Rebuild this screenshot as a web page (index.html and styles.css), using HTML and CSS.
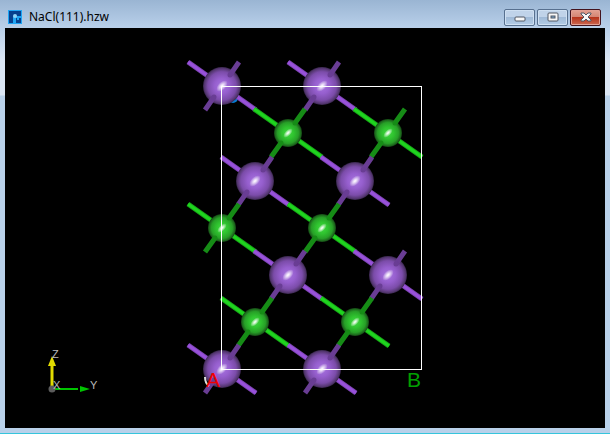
FILE: index.html
```html
<!DOCTYPE html>
<html lang="en">
<head>
  <meta charset="UTF-8" />
  <meta name="viewport" content="width=device-width, initial-scale=1.0" />
  <title>NaCl(111).hzw</title>
  <link rel="stylesheet" href="styles.css">
</head>
<body>

  <div class="window">
    <header class="titlebar">
      <svg class="app-icon" viewBox="0 0 14 14" aria-hidden="true">
        <rect width="14" height="14" fill="#1fa6f5" />
        <rect x="1" y="1" width="12" height="12" fill="#07418f" />
        <path d="M5 13V6h8v2H8v5z" fill="#1fa6f5" />
        <circle cx="7" cy="6" r="2" fill="#8ed2f7" />
        <rect x="8" y="8" width="5" height="5" fill="#07418f" />
        <rect x="9" y="8" width="2" height="2" fill="#1fa6f5" />
      </svg>
      <h1 class="title">NaCl(111).hzw</h1>
      <div class="controls">
        <button class="control" aria-label="Minimize">
          <svg viewBox="0 0 12 10"><rect x="1" y="5" width="10" height="4" rx="1" fill="#f7f7f7" stroke="#505763" /></svg>
        </button>
        <button class="control" aria-label="Maximize">
          <svg viewBox="0 0 12 10"><rect x="1" y="1" width="10" height="8" rx="1" fill="#f7f7f7" stroke="#505763" /><rect x="4" y="4" width="4" height="2" fill="#7dabd3" stroke="#505763" /></svg>
        </button>
        <button class="control close" aria-label="Close">
          <svg viewBox="0 0 12 10"><path d="M1 1h3l2 2 2-2h3v1L8 5l3 3v1H8L6 7 4 9H1V8l3-3-3-3z" fill="#f7f7f7" stroke="#505763" /></svg>
        </button>
      </div>
    </header>

    <main class="viewport">
      <svg class="scene" viewBox="0 0 600 400" role="img" aria-label="NaCl(111) crystal structure">
        <defs>
          <radialGradient id="naFill" cx="0.5" cy="0.5" r="0.5">
            <stop offset="0" stop-color="#a774e0" />
            <stop offset="0.4" stop-color="#965fce" />
            <stop offset="0.75" stop-color="#7b4ca9" />
            <stop offset="0.93" stop-color="#53366f" />
            <stop offset="1" stop-color="#36244a" />
          </radialGradient>
          <radialGradient id="clFill" cx="0.5" cy="0.5" r="0.5">
            <stop offset="0" stop-color="#42d842" />
            <stop offset="0.4" stop-color="#2fc42f" />
            <stop offset="0.75" stop-color="#279f27" />
            <stop offset="0.93" stop-color="#1c651c" />
            <stop offset="1" stop-color="#124012" />
          </radialGradient>
          <radialGradient id="shine">
            <stop offset="0" stop-color="#fff" />
            <stop offset="0.3" stop-color="#fff" stop-opacity="0.75" />
            <stop offset="1" stop-color="#fff" stop-opacity="0" />
          </radialGradient>

          <!-- half bonds run to the midpoint between two atoms -->
          <g id="na">
            <path class="bond na-bond" d="M-34 -24L34 24" />
            <path class="bond-light na-light" d="M-34 -24L34 24" />
            <circle r="19" fill="url(#naFill)" />
            <ellipse rx="7" ry="4" transform="rotate(-45)" fill="url(#shine)" />
            <path class="bond na-front" d="M8 -11L17 -24M-8 11L-17 24" />
            <path class="cap na-front" d="M8 -11h0M-8 11h0" />
          </g>
          <g id="cl">
            <path class="bond cl-bond" d="M-34 -24L34 24" />
            <path class="bond-light cl-light" d="M-34 -24L34 24" />
            <circle r="14" fill="url(#clFill)" />
            <ellipse rx="6" ry="3" transform="rotate(-45)" fill="url(#shine)" />
            <path class="bond cl-front" d="M7 -10L17 -24M-7 10L-17 24" />
            <path class="cap cl-front" d="M7 -10h0M-7 10h0" />
          </g>
        </defs>

        <circle cx="228" cy="70" r="5" fill="#087bd1" />

        <use href="#na" x="217" y="58" />
        <use href="#na" x="317" y="58" />
        <use href="#cl" x="283" y="105" />
        <use href="#cl" x="383" y="105" />
        <use href="#na" x="250" y="153" />
        <use href="#na" x="350" y="153" />
        <use href="#cl" x="217" y="200" />
        <use href="#cl" x="317" y="200" />
        <use href="#na" x="283" y="247" />
        <use href="#na" x="383" y="247" />
        <use href="#cl" x="250" y="294" />
        <use href="#cl" x="350" y="294" />
        <use href="#na" x="217" y="341" />
        <use href="#na" x="317" y="341" />

        <rect class="cell" x="216.5" y="58.5" width="200" height="283" />
        <path d="M200 349q0 6 4 9" fill="none" stroke="#ddd" stroke-width="2" />
        <text class="label label-a" x="201" y="359">A</text>
        <text class="label label-b" x="402" y="359">B</text>

        <!-- axes -->
        <path d="M47 360V338" stroke="#e2dc00" stroke-width="3" />
        <path d="M47 328l4 10h-8z" fill="#e2dc00" />
        <path d="M47 361H73" stroke="#00c400" stroke-width="2" />
        <path d="M75 358l10 3-10 3z" fill="#00c400" />
        <circle cx="47" cy="361" r="3.500" fill="#5c5c5c" />
        <text class="axis" x="47" y="330">Z</text>
        <text class="axis" x="48" y="361">X</text>
        <text class="axis" x="85" y="361">Y</text>
      </svg>
    </main>
  </div>

</body>
</html>
```

FILE: styles.css
```css
* {
  box-sizing: border-box;
}

body {
  margin: 0;
  font-family: "Noto Sans", "Open Sans", sans-serif;
  background: #000;
}

.window {
  display: flex;
  flex-direction: column;
  min-height: 100vh;
  padding: 0 5px 5px;
  background: linear-gradient(#9ab5d3, #b9d0ea 28px, #dbe6f4 60px, #dbe6f4 95px, #b9d1ea 96px);
  border-bottom: 1px solid #35c5dc;
}

.titlebar {
  display: flex;
  align-items: center;
  height: 28px;
  padding: 6px 4px 0 3px;
}

.app-icon {
  width: 14px;
  height: 14px;
}

.title {
  flex: 1;
  margin: 0 0 0 7px;
  font-size: 12px;
  font-weight: 400;
  line-height: 16px;
  color: #000;
}

.controls {
  display: flex;
  gap: 2px;
}

.control {
  display: flex;
  align-items: center;
  justify-content: center;
  width: 31px;
  height: 17px;
  padding: 0;
  border: 1px solid #57708f;
  border-radius: 2px;
  background: linear-gradient(#c0d3e9 45%, #a0bad7 50%, #b3cce6);
  box-shadow: inset 0 0 0 1px #cfe0f2;
}

.control svg {
  width: 12px;
  height: 10px;
}

.close {
  border-color: #43131d;
  background: linear-gradient(#e4a293, #d48675 45%, #b7351d 50%, #cc6850);
  box-shadow: inset 0 0 0 1px #e2a094;
}

.viewport {
  flex: 1;
  background: #000;
}

.scene {
  display: block;
  width: 100%;
}

.bond,
.bond-light,
.cap {
  fill: none;
  stroke-width: 5;
}

.bond-light {
  stroke-width: 3;
}

.cap {
  stroke-linecap: round;
}

.na-bond {
  stroke: #7e45b5;
}

.na-light {
  stroke: #9851da;
}

.na-front {
  stroke: #693d94;
}

.cl-bond {
  stroke: #17a817;
}

.cl-light {
  stroke: #1fd41f;
}

.cl-front {
  stroke: #168c16;
}

.cell {
  fill: none;
  stroke: #fff;
}

.label {
  font-family: "Liberation Sans", Arial, sans-serif;
  font-size: 21px;
}

.label-a {
  fill: #f00000;
}

.label-b {
  fill: #00a000;
}

.axis {
  font-family: "Liberation Sans", Arial, sans-serif;
  font-size: 11px;
  fill: #b8b8b8;
}
```
